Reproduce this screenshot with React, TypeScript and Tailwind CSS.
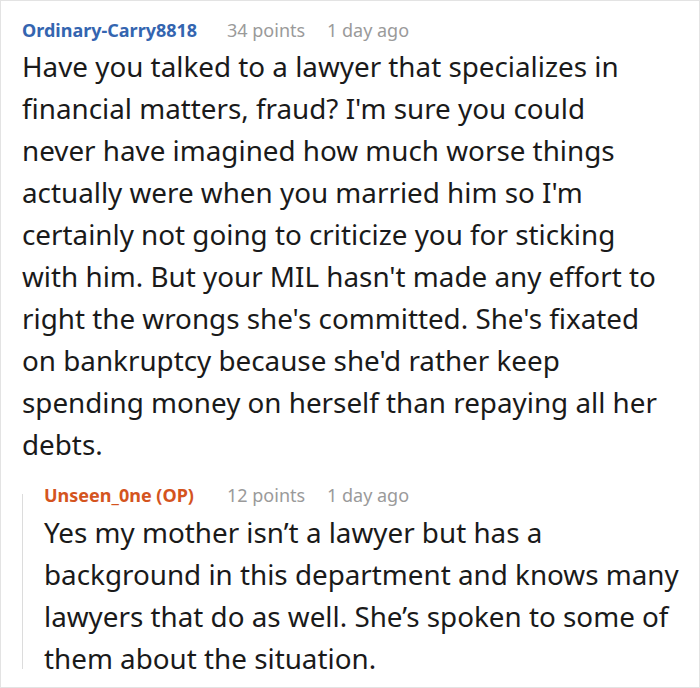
import React from 'react';

const font = { fontFamily: '"Noto Sans", "Open Sans", sans-serif' };

// line breaks kept as in the original post
const commentLines = [
  'Have you talked to a lawyer that specializes in',
  "financial matters, fraud? I'm sure you could",
  'never have imagined how much worse things',
  "actually were when you married him so I'm",
  'certainly not going to criticize you for sticking',
  "with him. But your MIL hasn't made any effort to",
  "right the wrongs she's committed. She's fixated",
  "on bankruptcy because she'd rather keep",
  'spending money on herself than repaying all her',
  'debts.',
];

const replyLines = [
  'Yes my mother isn’t a lawyer but has a',
  'background in this department and knows many',
  'lawyers that do as well. She’s spoken to some of',
  'them about the situation.',
];

const Header = ({ name, points, time, op }: { name: string; points: string; time: string; op?: boolean }) => (
  <div className="flex items-center h-[24px] text-[18px] leading-[24px] whitespace-nowrap">
    <span className={op ? 'font-bold text-[#d4541e] w-[183px]' : 'font-bold text-[#3465b0] w-[205px]'}>{name}</span>
    <span className="text-[#9a9a9a] w-[100px]">{points}</span>
    <span className="text-[#9a9a9a]">{time}</span>
  </div>
);

const Body = ({ lines }: { lines: string[] }) => (
  <div className="text-[27.8px] leading-[42px] whitespace-nowrap">
    {lines.map((l, i) => (
      <div key={i}>{l}</div>
    ))}
  </div>
);

export default function App() {
  return (
    <div
      style={font}
      className="w-[700px] h-[688px] border border-[#e3e3e3] bg-white pl-[21px] pr-[8px] pt-[17px] text-[#1a1a1a] overflow-hidden"
    >
      <Header name="Ordinary-Carry8818" points="34 points" time="1 day ago" />
      <div className="mt-[3px]">
        <Body lines={commentLines} />
      </div>

      {/* reply */}
      <div className="flex mt-[18px]">
        <div className="w-px bg-[#dcdcdc] mt-[11px] mb-[10px]" />
        <div className="ml-[21px] flex-1">
          <Header name="Unseen_0ne (OP)" points="12 points" time="1 day ago" op />
          <div className="mt-[4px]">
            <Body lines={replyLines} />
          </div>
        </div>
      </div>
    </div>
  );
}
